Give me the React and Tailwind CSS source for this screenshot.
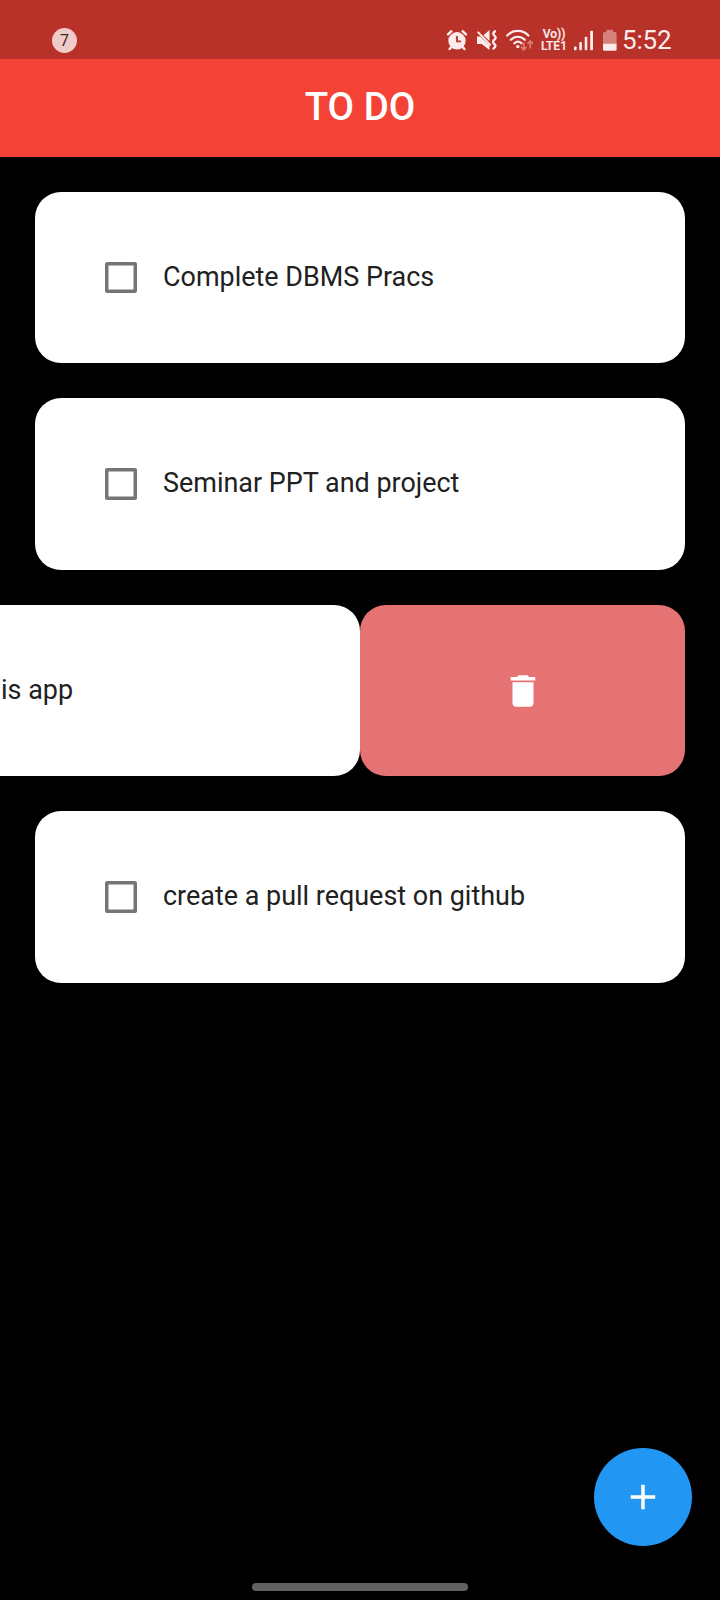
const FG = "#fdeceb";

function AlarmIcon() {
  return (
    <svg className="block h-6 w-6" viewBox="0 0 24 24" fill="none">
      <path d="M3 6.4 6.4 3.2M21 6.4 17.6 3.2M6 19.4 4.6 21M18 19.4l1.4 1.6" stroke={FG} strokeWidth="2.4" strokeLinecap="round" />
      <circle cx="12" cy="12.8" r="8.7" fill={FG} />
      <path d="M12 8v5.3h4" stroke="#b8322a" strokeWidth="1.8" />
    </svg>
  );
}

function MuteIcon() {
  return (
    <svg className="block h-6 w-6" viewBox="0 0 24 24" fill="none">
      <path d="M2 8.5v7.6h4.6L14.5 22v-4.5L5.2 8.5zM8.4 7.2 14.5 2v11z" fill={FG} />
      <path d="M3.2 4.4 15 16.8" stroke={FG} strokeWidth="2" strokeLinecap="round" />
      <path d="M20 3.2c-2.2 1.8-2.2 3.1-.6 4.4s1.6 2.900-.1 4.200-1.600 3 .1 4.200 1.200 2.900-1 4.600" stroke={FG} strokeWidth="2.4" strokeLinecap="round" />
    </svg>
  );
}

function WifiIcon() {
  return (
    <svg className="block h-6 w-[30px]" viewBox="0 0 30 24" fill="none">
      <path d="M2.2 7.6c5.8-6.2 15.4-6.2 21.2 0M5.8 11.8c4-4.1 10-4.1 14 0M9.3 15.3c2.3-2 5-2 7.2 0" stroke={FG} strokeWidth="2.2" strokeLinecap="round" />
      <circle cx="12.8" cy="18.6" r="1.7" fill={FG} />
      <path d="M18.8 14.500v7.300m-2.700-2.900 2.700 2.900 2.700-2.900M25.200 20.500V13m-2.700 2.900 2.700-2.900 2.700 2.900" stroke="#e07b74" strokeWidth="1.7" />
    </svg>
  );
}

function SignalIcon() {
  return (
    <svg className="block h-6 w-5" viewBox="0 0 20 24" fill={FG}>
      <rect x="0" y="18.5" width="2.6" height="3.8" rx=".8" />
      <rect x="5.3" y="14" width="2.6" height="8.3" rx=".8" />
      <rect x="10.7" y="8.8" width="2.6" height="13.5" rx=".8" />
      <rect x="16.2" y="2.8" width="2.8" height="19.5" rx=".8" />
    </svg>
  );
}

function BatteryIcon() {
  return (
    <svg className="block h-6 w-4" viewBox="0 0 16 24">
      <path d="M1 16V5.5q0-1.500 1.500-1.500h1.900V2.700q0-1 1-1h4.800q1 0 1 1V4h1.900q1.500 0 1.500 1.500V16z" fill="#d6817b" />
      <path d="M1 15.800h13.600v5.500q0 1.500-1.500 1.500H2.500q-1.500 0-1.500-1.500z" fill={FG} />
    </svg>
  );
}

function StatusBar() {
  return (
    <div className="flex h-[58.5px] items-start bg-[#b8322a] pt-7 text-[#fdeceb]">
      <div className="ml-[52px] flex size-[25px] items-center justify-center rounded-full bg-[#f1cbc9] text-[16px] leading-none text-[#3a2a29]">7</div>
      <div className="ml-[368px] flex">
        <AlarmIcon />
        <div className="ml-1.5"><MuteIcon /></div>
        <div className="ml-[6px]"><WifiIcon /></div>
        <div className="ml-[5px] flex w-7 flex-col items-center pt-[1px] text-[12px] font-medium leading-[11.5px]">
          <span className="[-webkit-text-stroke:0.2px]">Vo))</span>
          <span className="[-webkit-text-stroke:0.2px]">LTE1</span>
        </div>
        <div className="ml-1.5"><SignalIcon /></div>
        <div className="ml-2"><BatteryIcon /></div>
        <span className="ml-1 whitespace-nowrap text-[26px] leading-6 tracking-[-0.2px]">5:52</span>
      </div>
    </div>
  );
}

function Task({ label }) {
  return (
    <li className="flex h-[171.5px] items-center rounded-[26px] bg-white pl-[70px]">
      <span className="size-[31.5px] rounded-[2px] shadow-[inset_0_0_0_3.5px_#757575]" />
      <span className="ml-[26.5px] whitespace-nowrap pb-px text-[26.95px] leading-8 text-[#212121]">{label}</span>
    </li>
  );
}

function SwipedTask({ label }) {
  return (
    <li className="-ml-[35px] flex h-[171.5px]">
      <div className="flex w-[360px] items-center rounded-r-[26px] bg-white pl-px text-[26.95px] leading-8 text-[#212121]">{label}</div>
      <button className="flex flex-1 items-center justify-center rounded-[26px] bg-[#e57373] pt-[2px]" aria-label="Delete">
        <svg className="size-[42px]" viewBox="0 0 24 24" fill="#fff">
          <path d="M6 19c0 1.1.9 2 2 2h8c1.1 0 2-.9 2-2V7H6v12zM19 4h-3.5l-1-1h-5l-1 1H5v2h14V4z" />
        </svg>
      </button>
    </li>
  );
}

export default function App() {
  return (
    <div className="flex h-[1600px] w-[720px] flex-col overflow-hidden bg-black font-['Roboto',sans-serif]">
      <StatusBar />
      <header className="flex h-[98px] items-center justify-center bg-[#f44336] pb-[2px] text-[38.5px] font-medium text-white">
        <h1>TO DO</h1>
      </header>
      <ul className="flex flex-1 flex-col gap-[35px] px-[35px] pt-[35px]">
        <Task label="Complete DBMS Pracs" />
        <Task label="Seminar PPT and project" />
        <SwipedTask label="is app" />
        <Task label="create a pull request on github" />
      </ul>
      <button className="mr-7 flex size-[98px] items-center justify-center self-end rounded-full bg-[#2196f3]" aria-label="Add task">
        <svg className="size-[42px]" viewBox="0 0 24 24" fill="#fff">
          <path d="M19 13h-6v6h-2v-6H5v-2h6V5h2v6h6z" />
        </svg>
      </button>
      <div className="mb-[9px] mt-[37px] h-2 w-[216px] self-center rounded-full bg-[#626262]" />
    </div>
  );
}
